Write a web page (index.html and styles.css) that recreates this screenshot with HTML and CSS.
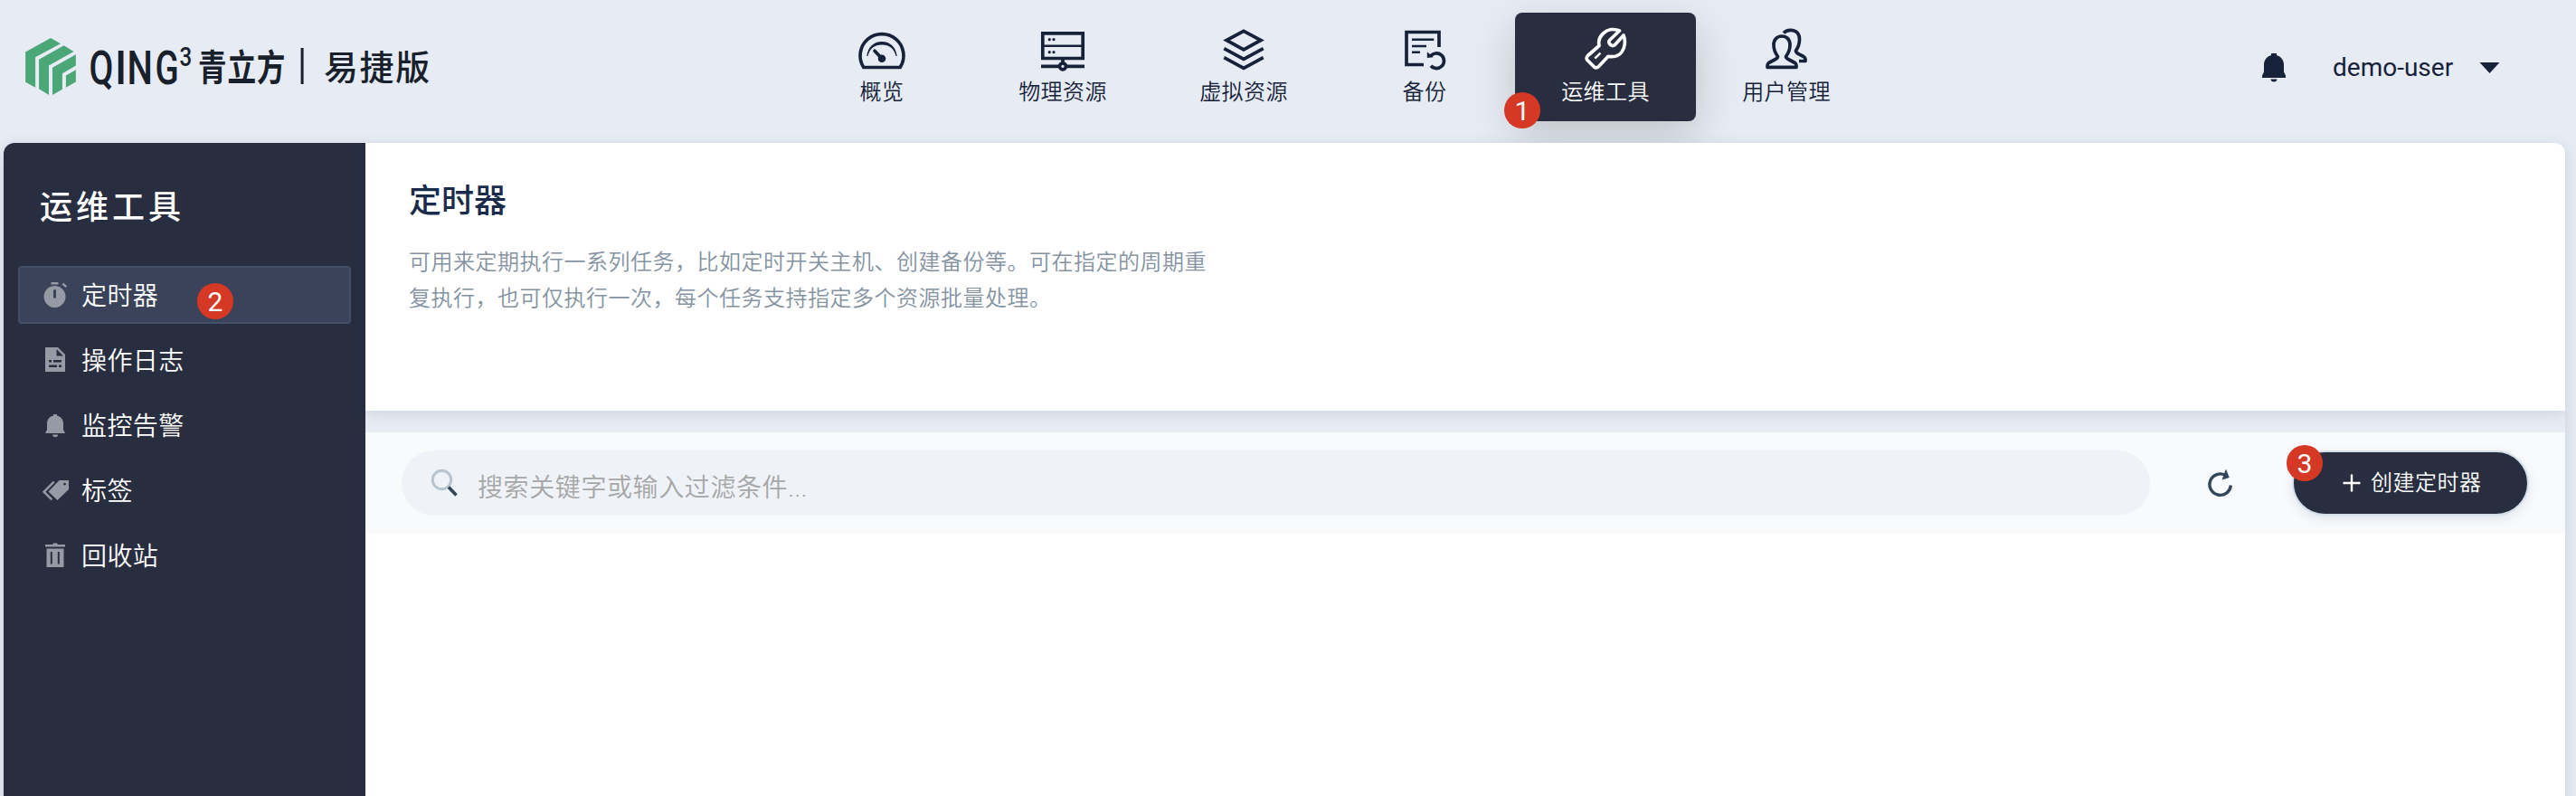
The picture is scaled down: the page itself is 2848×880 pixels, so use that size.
FILE: index.html
```html
<!DOCTYPE html>
<html lang="zh-CN">
<head>
<meta charset="utf-8">
<title>定时器</title>
<link rel="stylesheet" href="styles.css">
</head>
<body>
<header class="topbar">
  <div class="brand">
    <svg class="brand-logo" viewBox="84 126 168 190">
      <path d="M84 173 168 126 201 145 117 190V291L84 273zM129 198 212 151 245 171 162 218V316L129 296zM174 225 252 181V218L207 244V297L174 316zM219 251 252 232V272L219 291z"/>
    </svg>
    <svg class="brand-name" viewBox="-10 0 400 64">
      <g class="brand-latin">
        <text transform="translate(-1.5 50.500) scale(.75 1)">Q</text>
        <text transform="translate(27 50.500) scale(.9 1)">I</text>
        <text transform="translate(40.500 50.500) scale(.77 1)">N</text>
        <text transform="translate(71.500 50.500) scale(.74 1)">G</text>
      </g>
      <text class="brand-sup" transform="translate(98.500 31) scale(.8 1)">3</text>
      <text class="brand-cn" transform="translate(119 47) scale(.79 1)">青立方</text>
      <rect x="232.600" y="11" width="3" height="40"/>
      <text class="brand-edition" x="258" y="46">易捷版</text>
    </svg>
  </div>
  <nav class="nav">
    <a class="nav-item">
      <svg class="nav-icon" viewBox="0 0 56 56"><path d="M7.8 48.5A24 24 0 1 1 48.2 48.5Z"/><path class="solid" d="M11.3 36C12.5 26 19 20 28 20s15.500 6 16.700 16h-1.200C41.500 27.500 36 23.500 28 23.500S14.500 27.500 12.500 36z"/><path d="M20 30.300 28 38.700" stroke-linecap="round"/><circle class="solid" cx="28" cy="38.700" r="4.300"/></svg>
      <span>概览</span>
    </a>
    <a class="nav-item">
      <svg class="nav-icon" viewBox="0 0 56 56"><path d="M5.800 10.800H50.200V38.500H5.800zM28 39V44M4 47.300H24M32 47.300H52"/><path class="thin" d="M5 24.700H51"/><circle cx="28" cy="47.300" r="3.500"/><g class="solid"><circle cx="13.300" cy="17.700" r="1.600"/><circle cx="18" cy="17.700" r="1.600"/><circle cx="13.300" cy="31.700" r="1.600"/><circle cx="18" cy="31.700" r="1.600"/></g></svg>
      <span>物理资源</span>
    </a>
    <a class="nav-item">
      <svg class="nav-icon" viewBox="0 0 56 56"><path d="M28 8.300 47 18.500 28 28.800 9 18.500ZM6.300 27.700 28 39.400 49.700 27.700M6.300 37.700 28 49.400 49.700 37.700"/></svg>
      <span>虚拟资源</span>
    </a>
    <a class="nav-item">
      <svg class="nav-icon" viewBox="0 0 56 56"><path d="M44 26V9.500H8V45.500H27"/><path class="thin" d="M14 17.700H38.300M14 25H30M14 31.700H23"/><path d="M34.500 36.300A8.300 8.300 0 1 1 35 46.800"/><path class="solid" d="M30.800 31.300 37.500 37.300 30.800 38z"/></svg>
      <span>备份</span>
    </a>
    <a class="nav-item active">
      <svg class="nav-icon" viewBox="0 0 56 56"><path stroke-linejoin="round" d="M43.500 8C38 5.500 31 6 26 10.500C21.500 14.500 20 20 21 24.500L8.500 35.500Q6 38 8 40.500L15.500 48Q18 50 20.500 47.500L31 36.300C38 37.500 43 35.500 46 31.500C49.500 27 50.500 19 48 13L38.500 23.500Q36 25.500 33.500 23.500L32.300 22Q31 20 33 18Z"/><path class="thin" d="M16.300 38.500 22.500 32.700"/></svg>
      <span>运维工具</span>
      <b class="badge badge-nav">1</b>
    </a>
    <a class="nav-item">
      <svg class="nav-icon" viewBox="0 0 56 56"><path stroke-linejoin="round" d="M23 14C17 14 13.800 18.500 14 24C14 29 16 33 18.500 36.500C18.500 38 17 39 15 40L8.500 43.500Q7 44.500 7 46.500V48.300H39V46.500Q39 44.500 37.500 43.500L31 40C29 39 27.500 38 27.500 36.500C30 33 32 29 32 24C32.200 18.500 29 14 23 14ZM25 10.500C27 8 29.500 7.300 32.500 7.300C39.500 7.300 42.500 12 42.500 17.500C42.500 22 41 26.500 38.500 30C38.500 31.500 39.500 32.500 41 33.300L47 36.500Q49 37.700 49 39.500V41.500H42"/></svg>
      <span>用户管理</span>
    </a>
  </nav>
  <div class="account">
    <svg class="account-bell" viewBox="0 0 26 32"><path d="M10 0h6v2c5 1.500 8 5.500 8 10.500V20c0 2 2 3 2 5v2H0v-2c0-2 2-3 2-5v-7.500C2 7.500 5 3.500 10 2zM9.500 28.500h7c0 4-7 4-7 0z"/></svg>
    <span class="account-name">demo-user</span>
    <svg class="account-caret" viewBox="0 0 22 12"><path d="M0 0H22L11 12z"/></svg>
  </div>
</header>

<div class="shell">
  <aside class="sidebar">
    <h2 class="sidebar-title">运维工具</h2>
    <a class="side-item active">
      <svg class="side-icon" viewBox="0 0 32 32"><path d="M10.500 2h8v2.500h-8zM22.500 4.500l1.700-1.700 4 3.500-1.700 1.700z"/><path fill-rule="evenodd" d="M14.500 6a12 12 0 1 0 .01 0zM13 10.300h3v9.300h-3z"/></svg>
      <span>定时器</span>
      <b class="badge badge-side">2</b>
    </a>
    <a class="side-item">
      <svg class="side-icon" viewBox="0 0 32 32"><path fill-rule="evenodd" d="M4 2h14l8 8v19H4zM16.500 4v7.500H24zM8 16v2.500h3V16zM13 16v2.500h9V16zM8 21.500V24h9v-2.500zM19 21.500V24h3v-2.500z"/></svg>
      <span>操作日志</span>
    </a>
    <a class="side-item">
      <svg class="side-icon" viewBox="0 0 32 32"><path d="M13 4h4v1.500c4.500 1 7 4.500 7 8.500v6.500c0 2 1.800 2.500 1.800 4.500H4.300c0-2 1.700-2.500 1.700-4.500V14c0-4 2.500-7.500 7-8.500zM12 26.500h6.300c0 3.500-6.300 3.500-6.300 0z"/></svg>
      <span>监控告警</span>
    </a>
    <a class="side-item">
      <svg class="side-icon" viewBox="0 0 32 32"><path fill-rule="evenodd" d="M19.500 5H30v10L17.500 27 7.500 17.500zM25.500 7.700a1.400 1.400 0 1 0 .01 0z"/><path d="M12.800 5.800 14.500 7.500 4.300 17.700 12.200 25.600 10.500 27.300 .800 17.700z"/></svg>
      <span>标签</span>
    </a>
    <a class="side-item">
      <svg class="side-icon" viewBox="0 0 32 32"><path d="M4 4h8l1-1.500h4L18 4h8v2.500H4z"/><path fill-rule="evenodd" d="M5.500 8.500h19V29h-19zM9.800 12v13.500h2V12zM17.800 12v13.500h2V12z"/></svg>
      <span>回收站</span>
    </a>
  </aside>

  <main class="content">
    <section class="intro">
      <h1 class="intro-title">定时器</h1>
      <p class="intro-text">可用来定期执行一系列任务，比如定时开关主机、创建备份等。可在指定的周期重复执行，也可仅执行一次，每个任务支持指定多个资源批量处理。</p>
    </section>
    <section class="toolbar">
      <div class="search">
        <svg class="search-icon" viewBox="0 0 32 32"><circle cx="12.500" cy="12.500" r="10.200"/><path d="M20 20.500 28.500 29.500"/></svg>
        <span>搜索关键字或输入过滤条件...</span>
      </div>
      <svg class="refresh" viewBox="0 0 32 36"><path class="ring" d="M27.300 20.500A11.700 11.700 0 1 1 21.500 9.500"/><path d="M22 2.500 25.800 12 17.500 14.500z"/></svg>
      <button class="create">
        <svg class="plus" viewBox="0 0 20 20"><path d="M10 .500V19.500M.500 10H19.500"/></svg>
        <span>创建定时器</span>
        <b class="badge badge-create">3</b>
      </button>
    </section>
    <section class="list"></section>
  </main>
</div>
</body>
</html>
```
FILE: styles.css
```css
* { box-sizing: border-box; }

body {
  margin: 0;
  height: 880px;
  overflow: hidden;
  background: #e7ecf4;
  color: #16213a;
  font-family: Roboto, "Noto Sans CJK SC", sans-serif;
  font-weight: 350;
}

h1, h2, p { margin: 0; }

.topbar {
  display: grid;
  grid-template-columns: 875px 1200px 1fr;
  height: 158px;
}

.brand {
  display: flex;
  align-items: flex-start;
  gap: 6px;
  padding: 42px 0 0 28px;
}
.brand-logo { width: 56px; height: 63px; fill: #4ba777; }
.brand-name { width: 400px; height: 64px; fill: #18202b; overflow: visible; }
.brand-latin { font-size: 52px; font-weight: 500; }
.brand-sup { font-size: 30px; font-weight: 500; }
.brand-cn { font-size: 40px; font-weight: 700; letter-spacing: 1px; }
.brand-edition { font-size: 38px; font-weight: 500; letter-spacing: 1.6px; }

.nav { display: flex; padding-top: 14px; }
.nav-item {
  position: relative;
  display: flex;
  flex-direction: column;
  align-items: center;
  width: 200px;
  height: 120px;
  padding-top: 12px;
  border-radius: 8px;
  font-size: 24px;
  line-height: 36px;
  letter-spacing: .4px;
}
.nav-item span { padding-top: 2px; }
.nav-item.active {
  background: #282d40;
  color: #fff;
  box-shadow: 0 16px 48px rgba(0, 0, 0, .18);
}
.nav-icon {
  flex: none;
  width: 56px;
  height: 56px;
  fill: none;
  stroke: currentColor;
  stroke-width: 3.7;
}
.nav-icon .thin { stroke-width: 2.4; }
.nav-icon .solid { fill: currentColor; stroke: none; }

.account { display: flex; align-items: flex-start; padding: 59px 0 0 426px; }
.account-bell { flex: none; width: 26px; height: 32px; fill: #16213a; }
.account-name {
  flex: none;
  width: 136px;
  margin: -1px 26px 0 52px;
  font-size: 28px;
  font-weight: 400;
  line-height: 34px;
  white-space: nowrap;
}
.account-caret { flex: none; width: 23px; height: 12px; margin-top: 10px; fill: #16213a; }

.badge {
  position: absolute;
  width: 40px;
  height: 40px;
  border-radius: 50%;
  background: #d53825;
  color: #fff;
  font: 400 30px/41px Roboto, sans-serif;
  letter-spacing: 0;
  text-align: center;
}
.badge-nav { left: -12px; top: 88px; }
.badge-side { left: 196px; top: 17px; }
.badge-create { left: -8px; top: -8px; }

.shell {
  position: relative;
  display: grid;
  grid-template-columns: 400px 1fr;
  width: 2832px;
  height: 760px;
  margin-left: 4px;
  border-radius: 12px;
  overflow: hidden;
  box-shadow: 0 4px 16px rgba(50, 75, 90, .18);
}

.sidebar { padding: 0 16px; background: #282d40; color: #fff; }
.sidebar-title {
  height: 136px;
  padding: 46px 0 0 24px;
  font-size: 36px;
  font-weight: 500;
  line-height: 52px;
  letter-spacing: 4px;
}
.side-item {
  position: relative;
  display: flex;
  align-items: center;
  gap: 12px;
  height: 64px;
  margin-bottom: 8px;
  padding-left: 24px;
  border: 2px solid transparent;
  border-radius: 4px;
  font-size: 28px;
  line-height: 40px;
  letter-spacing: .4px;
}
.side-item span { padding-top: 3px; }
.side-item.active { background: #3a4359; border-color: #445068; }
.side-icon { width: 32px; height: 32px; fill: #969aa4; }

.content { display: flex; flex-direction: column; background: #e7ecf4; }
.intro {
  height: 296px;
  margin-bottom: 24px;
  padding: 38px 48px 0;
  background: #fff;
  box-shadow: 0 4px 16px rgba(50, 65, 85, .12);
}
.intro-title {
  margin-bottom: 20px;
  color: #1a2b4c;
  font-size: 36px;
  font-weight: 500;
  line-height: 54px;
}
.intro-text {
  width: 884px;
  color: #8492a2;
  font-size: 24px;
  line-height: 40px;
  letter-spacing: .5px;
}

.toolbar {
  position: relative;
  display: flex;
  align-items: flex-start;
  height: 112px;
  padding: 20px 40px 0 40px;
  background: #f9fafc;
}
.search {
  display: flex;
  align-items: center;
  gap: 20px;
  width: 1933px;
  height: 72px;
  padding-left: 32px;
  border-radius: 36px;
  background: #eff3f8;
  color: #a6a6a6;
  font-size: 28px;
  line-height: 40px;
  letter-spacing: .6px;
}
.search span { padding-top: 11px; }
.search-icon { width: 32px; height: 32px; fill: none; stroke: #b8c4cf; stroke-width: 3; }
.search-icon path { stroke: #33475a; stroke-width: 3.6; }
.refresh { width: 32px; height: 36px; margin: 18px 0 0 62px; fill: #33475a; }
.refresh .ring { fill: none; stroke: #33475a; stroke-width: 3.4; }
.create {
  position: relative;
  display: flex;
  align-items: center;
  gap: 11px;
  width: 262px;
  height: 72px;
  margin-left: auto;
  padding: 0 0 0 54px;
  border: 2px solid #d5dfe9;
  border-radius: 36px;
  background: #282d40;
  box-shadow: 0 4px 12px rgba(50, 80, 120, .12);
  color: #fff;
  font: 350 24px/36px Roboto, "Noto Sans CJK SC", sans-serif;
  letter-spacing: .5px;
}
.plus { width: 20px; height: 20px; stroke: #fff; stroke-width: 2.4; }
.list { flex: 1; background: #fff; }
```
